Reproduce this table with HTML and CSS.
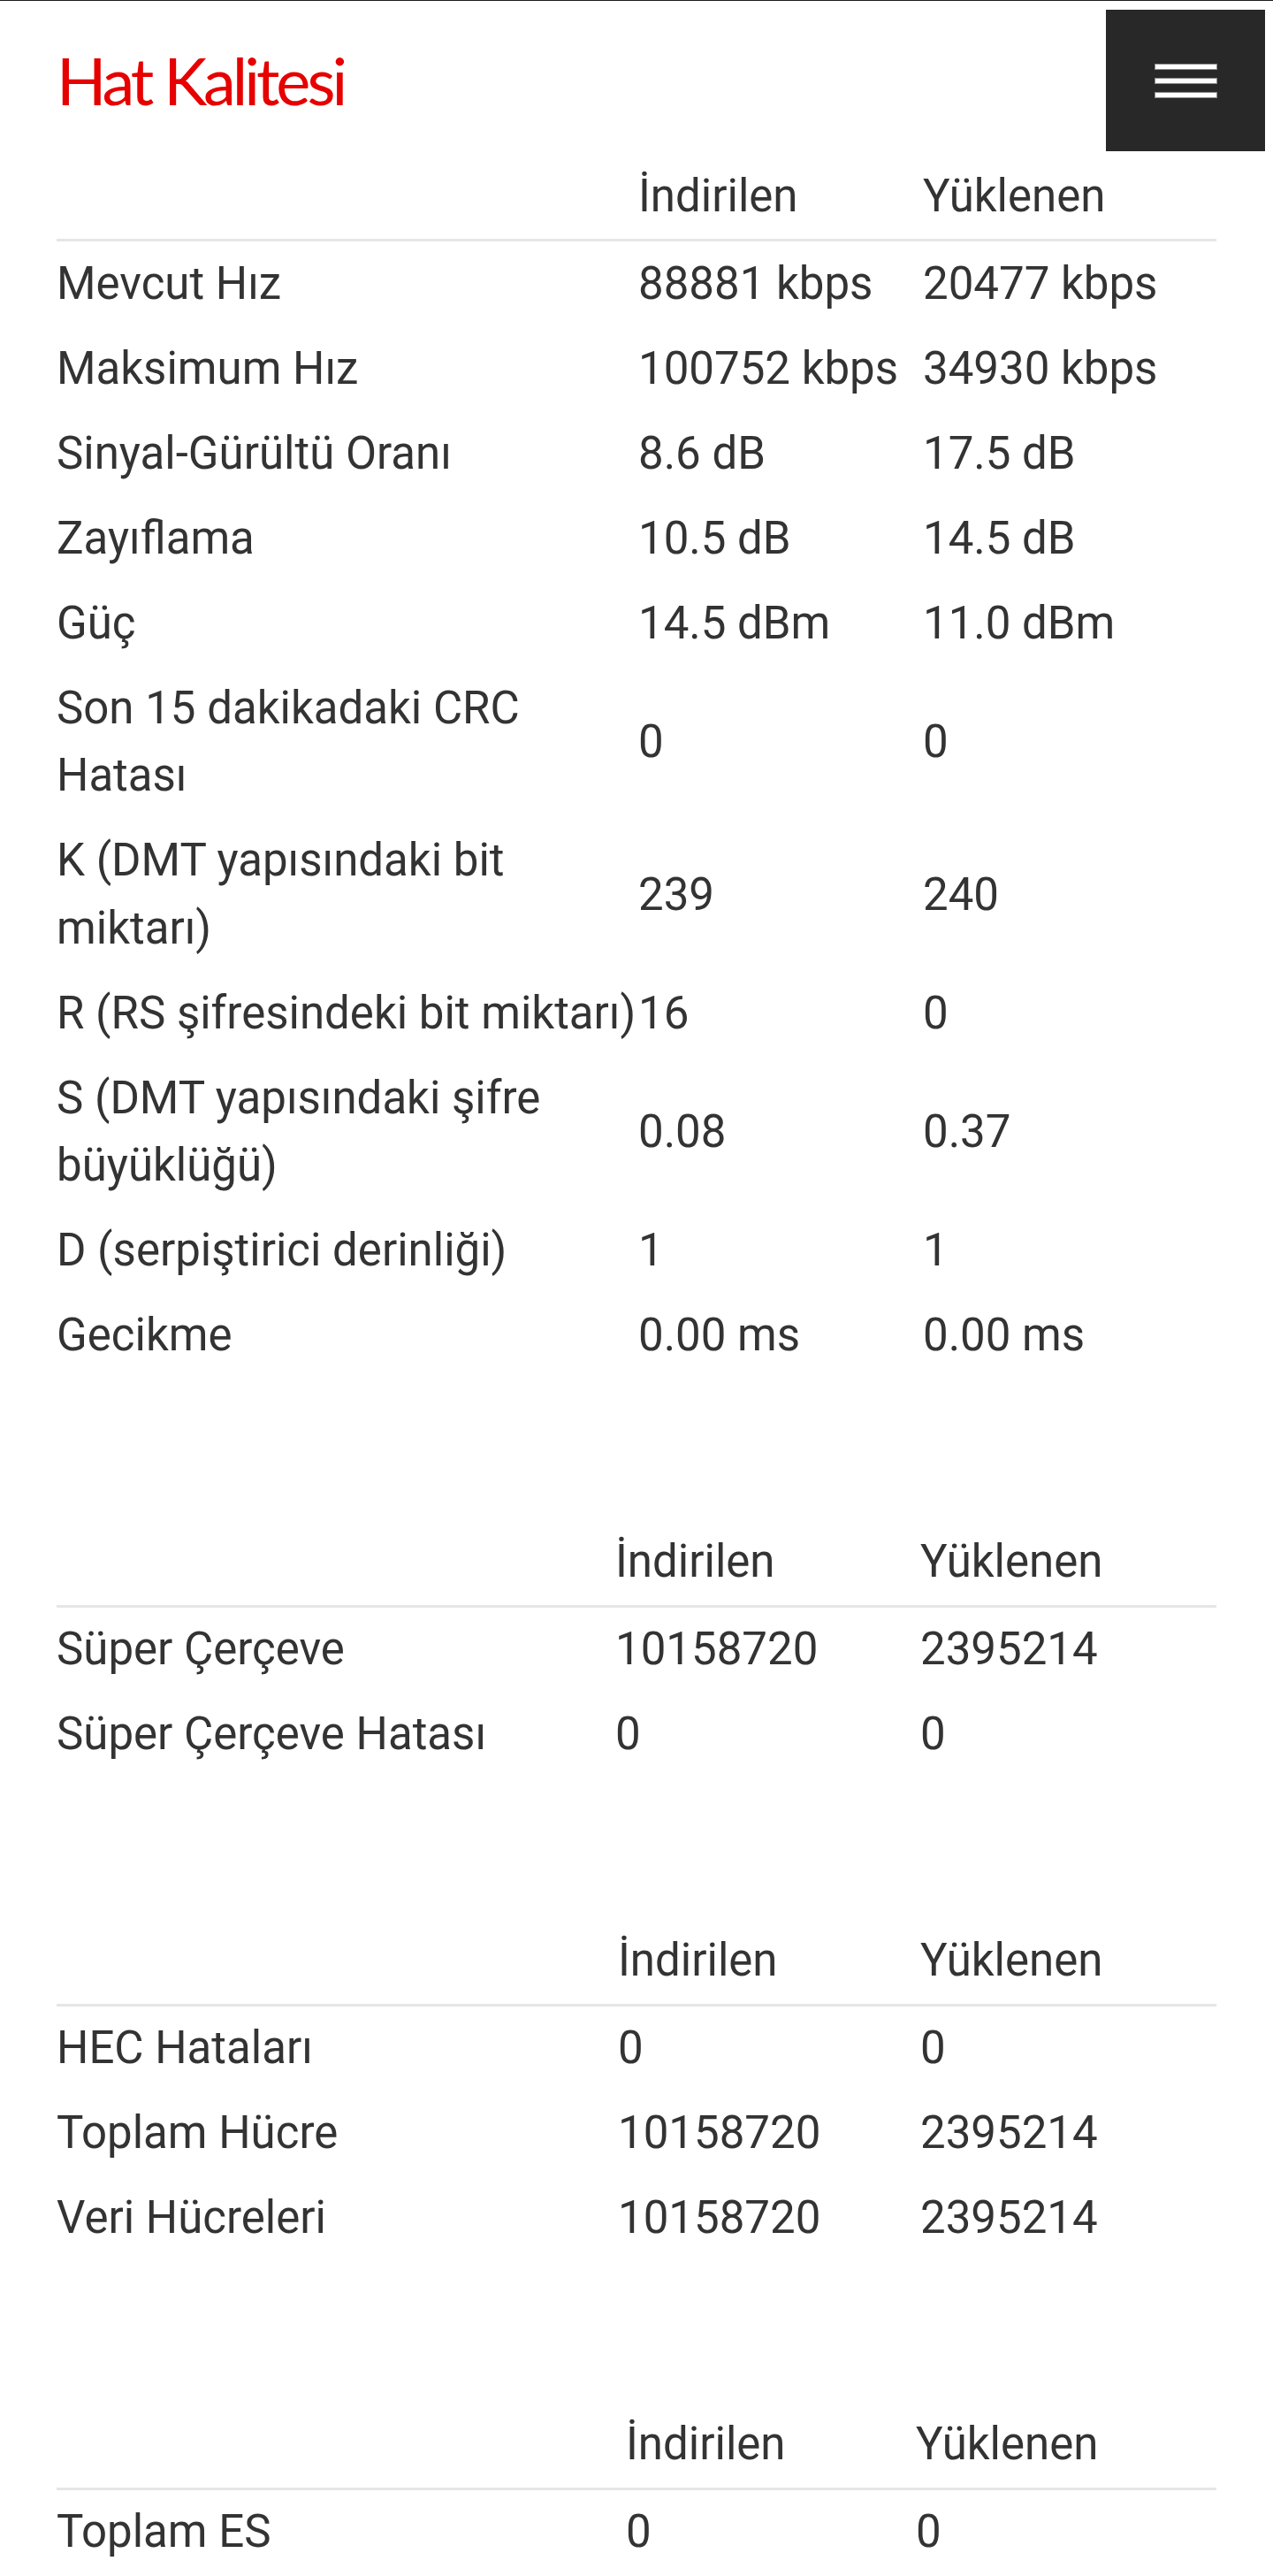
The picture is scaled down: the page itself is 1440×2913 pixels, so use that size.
FILE: index.html
```html
<!DOCTYPE html>
<html lang="tr">
<head>
  <meta charset="UTF-8" />
  <meta name="viewport" content="width=device-width, initial-scale=1.0"/>
  <title>Hat Kalitesi</title>
  <link rel="stylesheet" href="styles.css">
</head>
<body>
  <header class="top">
    <h1 class="page-title">Hat Kalitesi</h1>
    <button class="menu-btn" aria-label="Menü">
      <span></span>
      <span></span>
      <span></span>
    </button>
  </header>

  <table class="stats line">
    <thead>
      <tr>
        <th class="c1"></th>
        <th class="c2">İndirilen</th>
        <th class="c3">Yüklenen</th>
      </tr>
    </thead>
    <tbody>
      <tr><td>Mevcut Hız</td><td>88881 kbps</td><td>20477 kbps</td></tr>
      <tr><td>Maksimum Hız</td><td>100752 kbps</td><td>34930 kbps</td></tr>
      <tr><td>Sinyal-Gürültü Oranı</td><td>8.6 dB</td><td>17.5 dB</td></tr>
      <tr><td>Zayıflama</td><td>10.5 dB</td><td>14.5 dB</td></tr>
      <tr><td>Güç</td><td>14.5 dBm</td><td>11.0 dBm</td></tr>
      <tr><td>Son 15 dakikadaki CRC Hatası</td><td>0</td><td>0</td></tr>
      <tr><td>K (DMT yapısındaki bit miktarı)</td><td>239</td><td>240</td></tr>
      <tr><td class="nowrap">R (RS şifresindeki bit miktarı)</td><td>16</td><td>0</td></tr>
      <tr><td>S (DMT yapısındaki şifre büyüklüğü)</td><td>0.08</td><td>0.37</td></tr>
      <tr><td>D (serpiştirici derinliği)</td><td>1</td><td>1</td></tr>
      <tr><td>Gecikme</td><td>0.00 ms</td><td>0.00 ms</td></tr>
    </tbody>
  </table>

  <table class="stats frames">
    <thead>
      <tr>
        <th class="c1"></th>
        <th class="c2">İndirilen</th>
        <th class="c3">Yüklenen</th>
      </tr>
    </thead>
    <tbody>
      <tr><td>Süper Çerçeve</td><td>10158720</td><td>2395214</td></tr>
      <tr><td>Süper Çerçeve Hatası</td><td>0</td><td>0</td></tr>
    </tbody>
  </table>

  <table class="stats cells">
    <thead>
      <tr>
        <th class="c1"></th>
        <th class="c2">İndirilen</th>
        <th class="c3">Yüklenen</th>
      </tr>
    </thead>
    <tbody>
      <tr><td>HEC Hataları</td><td>0</td><td>0</td></tr>
      <tr><td>Toplam Hücre</td><td>10158720</td><td>2395214</td></tr>
      <tr><td>Veri Hücreleri</td><td>10158720</td><td>2395214</td></tr>
    </tbody>
  </table>

  <table class="stats errors">
    <thead>
      <tr>
        <th class="c1"></th>
        <th class="c2">İndirilen</th>
        <th class="c3">Yüklenen</th>
      </tr>
    </thead>
    <tbody>
      <tr><td>Toplam ES</td><td>0</td><td>0</td></tr>
    </tbody>
  </table>
</body>
</html>
```

FILE: styles.css
```css
body {
  margin: 0;
  padding: 0 64px;
  border-top: 1px solid #1c1c1c;
  background: #fff;
  font-family: Roboto, 'Noto Sans', sans-serif;
  color: #333;
}

.top {
  display: flex;
  justify-content: space-between;
  align-items: flex-start;
  padding: 10px 0 3px;
  margin-right: -55px;
}

.page-title {
  margin: 40px 0 0;
  font-family: Lato, 'Open Sans', sans-serif;
  font-size: 74px;
  font-weight: 400;
  line-height: 80px;
  letter-spacing: -4px;
  color: #e60000;
}

.menu-btn {
  width: 180px;
  height: 160px;
  border: none;
  background: #282828;
  display: flex;
  flex-direction: column;
  align-items: center;
  justify-content: center;
  gap: 9px;
  padding: 0;
  cursor: pointer;
}

.menu-btn span {
  display: block;
  width: 71px;
  height: 7px;
  box-sizing: border-box;
  background: #fff;
  border: 1px solid #8a8a8a;
}

.stats {
  width: 100%;
  table-layout: fixed;
  border-collapse: separate;
  border-spacing: 0;
  margin: 0 0 160px;
  font-size: 51px;
  line-height: 76.5px;
}

.stats th,
.stats td {
  padding: 9.75px 0;
  text-align: left;
  vertical-align: middle;
  font-weight: 400;
}

.stats th {
  border-bottom: 3px solid #e6e6e6;
}

.stats .nowrap {
  white-space: nowrap;
}

.line .c1 { width: 658px; }
.line .c2 { width: 322px; }

.frames .c1 { width: 632px; }
.frames .c2 { width: 345px; }

.cells .c1 { width: 635px; }
.cells .c2 { width: 342px; }

.errors .c1 { width: 644px; }
.errors .c2 { width: 328px; }
```
